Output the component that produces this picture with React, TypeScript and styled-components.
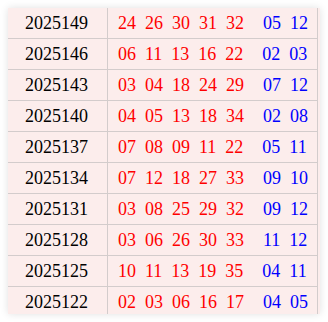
import React from "react";
import styled, { createGlobalStyle } from "styled-components";

type Draw = { issue: string; red: string[]; blue: string[] };

const draws: Draw[] = [
  { issue: "2025149", red: ["24", "26", "30", "31", "32"], blue: ["05", "12"] },
  { issue: "2025146", red: ["06", "11", "13", "16", "22"], blue: ["02", "03"] },
  { issue: "2025143", red: ["03", "04", "18", "24", "29"], blue: ["07", "12"] },
  { issue: "2025140", red: ["04", "05", "13", "18", "34"], blue: ["02", "08"] },
  { issue: "2025137", red: ["07", "08", "09", "11", "22"], blue: ["05", "11"] },
  { issue: "2025134", red: ["07", "12", "18", "27", "33"], blue: ["09", "10"] },
  { issue: "2025131", red: ["03", "08", "25", "29", "32"], blue: ["09", "12"] },
  { issue: "2025128", red: ["03", "06", "26", "30", "33"], blue: ["11", "12"] },
  { issue: "2025125", red: ["10", "11", "13", "19", "35"], blue: ["04", "11"] },
  { issue: "2025122", red: ["02", "03", "06", "16", "17"], blue: ["04", "05"] },
];

function App() {
  return (
    <>
      <GlobalStyle />
      <Card>
        {draws.map((d) => (
          <Row key={d.issue}>
            <Issue>{d.issue}</Issue>
            <Balls>
              {d.red.map((n, i) => (
                <Ball key={"r" + i} $color="#ff0000">
                  {n}
                </Ball>
              ))}
              <Spacer />
              {d.blue.map((n, i) => (
                <Ball key={"b" + i} $color="#0000ff">
                  {n}
                </Ball>
              ))}
            </Balls>
          </Row>
        ))}
      </Card>
    </>
  );
}
export default App;

const GlobalStyle = createGlobalStyle`
  body {
    margin: 0;
    background: #ffffff;
    font-family: "Liberation Serif", "Noto Sans CJK SC", serif;
  }
`;

const Card = styled.div`
  margin: 8px;
  width: 312px;
  height: 306px;
  overflow: hidden;
  background-color: #fcedec;
  box-shadow: 0px 0px 8px rgba(0, 0, 0, 0.12);
`;

const Row = styled.div`
  display: grid;
  grid-template-columns: 100px 1fr;
  width: 310px;
  height: 31px;
  box-sizing: border-box;
  border-bottom: solid 1px #d3cccc;
  border-right: solid 1px #d3cccc;
`;

const Issue = styled.div`
  display: flex;
  align-items: center;
  justify-content: center;
  padding-right: 2px;
  border-right: solid 1px #d3cccc;
  color: #000000;
  font-size: 18px;
`;

const Balls = styled.div`
  display: flex;
  align-items: center;
  gap: 9px;
  padding-left: 10px;
  font-size: 18px;
`;

const Ball = styled.span<{ $color: string }>`
  color: ${(p) => p.$color};
  line-height: 1;
`;

const Spacer = styled.span`
  width: 1px;
`;
